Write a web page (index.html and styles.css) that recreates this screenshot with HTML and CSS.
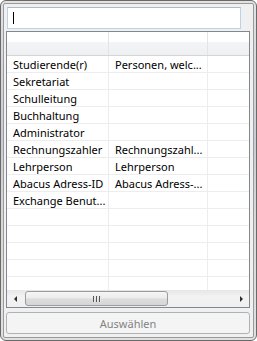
FILE: index.html
```html
<!DOCTYPE html>
<html lang="de">
<head>
    <meta charset="UTF-8">
    <meta name="viewport" content="width=device-width, initial-scale=1.0">
    <title>Auswahl</title>
    <link rel="stylesheet" href="styles.css">
</head>
<body>
    <div class="window">
        <div class="panel">
            <div class="search"><span class="caret"></span></div>

            <div class="grid">
                <div class="row head">
                    <div class="cell c1"></div>
                    <div class="cell c2"></div>
                    <div class="cell c3"></div>
                </div>
                <div class="body">
                    <div class="row"><div class="cell c1">Studierende(r)</div><div class="cell c2">Personen, welc...</div><div class="cell c3"></div></div>
                    <div class="row"><div class="cell c1">Sekretariat</div><div class="cell c2"></div><div class="cell c3"></div></div>
                    <div class="row"><div class="cell c1">Schulleitung</div><div class="cell c2"></div><div class="cell c3"></div></div>
                    <div class="row"><div class="cell c1">Buchhaltung</div><div class="cell c2"></div><div class="cell c3"></div></div>
                    <div class="row"><div class="cell c1">Administrator</div><div class="cell c2"></div><div class="cell c3"></div></div>
                    <div class="row"><div class="cell c1">Rechnungszahler</div><div class="cell c2">Rechnungszahl...</div><div class="cell c3"></div></div>
                    <div class="row"><div class="cell c1">Lehrperson</div><div class="cell c2">Lehrperson</div><div class="cell c3"></div></div>
                    <div class="row"><div class="cell c1">Abacus Adress-ID</div><div class="cell c2">Abacus Adress-...</div><div class="cell c3"></div></div>
                    <div class="row"><div class="cell c1">Exchange Benut...</div><div class="cell c2"></div><div class="cell c3"></div></div>
                    <div class="row"><div class="cell c1"></div><div class="cell c2"></div><div class="cell c3"></div></div>
                    <div class="row"><div class="cell c1"></div><div class="cell c2"></div><div class="cell c3"></div></div>
                    <div class="row"><div class="cell c1"></div><div class="cell c2"></div><div class="cell c3"></div></div>
                    <div class="row"><div class="cell c1"></div><div class="cell c2"></div><div class="cell c3"></div></div>
                    <div class="row"><div class="cell c1"></div><div class="cell c2"></div><div class="cell c3"></div></div>
                </div>
                <div class="hscroll">
                    <span class="arrow left"></span>
                    <div class="track">
                        <div class="thumb"><span class="grip"></span><span class="grip"></span><span class="grip"></span></div>
                    </div>
                    <span class="arrow right"></span>
                </div>
            </div>

            <button type="button" class="select-btn" disabled>Auswählen</button>
        </div>
    </div>
</body>
</html>
```

FILE: styles.css
```css
body {
    margin: 0;
    padding: 0;
    font-family: "Noto Sans", "Open Sans", sans-serif;
    font-size: 11px;
    color: #000;
    background: #fff;
}
.window {
    width: 257px;
    height: 341px;
    box-sizing: border-box;
    border: 1px solid #6a6a6a;
    border-radius: 6px;
    padding: 2px;
    background: linear-gradient(to bottom, #e2e2e2 0%, #cfd1d8 30%, #c9ccd6 40%, #d8d8d8 65%, #e0e0e0 100%);
}
.panel {
    height: 100%;
    box-sizing: border-box;
    border: 1px solid #9a9a9a;
    border-radius: 2px;
    background: #f0f0f0;
    display: flex;
    flex-direction: column;
}
.search {
    margin: 3px 0 0 3px;
    width: 234px;
    height: 22px;
    box-sizing: border-box;
    border: 1px solid #b9d2e8;
    border-top-color: #a8bccf;
    background: #fff;
    display: flex;
    align-items: center;
    padding-left: 5px;
}
.caret {
    width: 1px;
    height: 12px;
    background: #000;
}
.grid {
    margin: 2px 3px 0 2px;
    border: 1px solid #828790;
    background: #fff;
    display: flex;
    flex-direction: column;
}
.row {
    display: flex;
    height: 17px;
    box-sizing: border-box;
    border-bottom: 1px solid #ededed;
}
.cell {
    box-sizing: border-box;
    padding-left: 6px;
    line-height: 17px;
    white-space: nowrap;
    overflow: hidden;
    border-right: 1px solid #ededed;
}
.c1 { width: 102px; }
.c2 { width: 99px; }
.c3 { flex: 1; border-right: none; }
.head {
    height: 24px;
    border-bottom: 1px solid #d5d5d5;
    background: linear-gradient(to bottom, #ffffff 0%, #ffffff 42%, #f3f4f6 46%, #eff0f2 100%);
}
.head .cell {
    border-right-color: #e3e4e6;
}
.head .c3 { border-right: none; }
.body {
    height: 234px;
    overflow: hidden;
}
.hscroll {
    height: 17px;
    display: flex;
    align-items: center;
    background: linear-gradient(to bottom, #e6e6e6, #f2f2f2 40%, #f0f0f0);
}
.arrow {
    width: 0;
    height: 0;
    border-top: 3px solid transparent;
    border-bottom: 3px solid transparent;
}
.arrow.left {
    margin: 0 8px 0 7px;
    border-right: 3px solid #2e2e2e;
}
.arrow.right {
    margin: 0 6px 0 0;
    border-left: 3px solid #2e2e2e;
}
.track {
    flex: 1;
    height: 100%;
    display: flex;
    align-items: center;
}
.thumb {
    width: 143px;
    height: 15px;
    box-sizing: border-box;
    border: 1px solid #9b9b9b;
    border-radius: 3px;
    background: linear-gradient(to bottom, #f6f6f6 0%, #ececec 45%, #dcdcdc 55%, #d6d6d6 100%);
    display: flex;
    justify-content: center;
    align-items: center;
    gap: 1px;
}
.grip {
    width: 2px;
    height: 6px;
    background: #555;
    border-right: 1px solid #e8e8e8;
    box-sizing: border-box;
}
.select-btn {
    margin: 4px 3px 0 2px;
    height: 22px;
    border: 1px solid #adb2b5;
    border-radius: 3px;
    background: #f4f4f4;
    color: #838383;
    font-family: "Noto Sans", "Open Sans", sans-serif;
    font-size: 11px;
    padding: 0;
}
```
